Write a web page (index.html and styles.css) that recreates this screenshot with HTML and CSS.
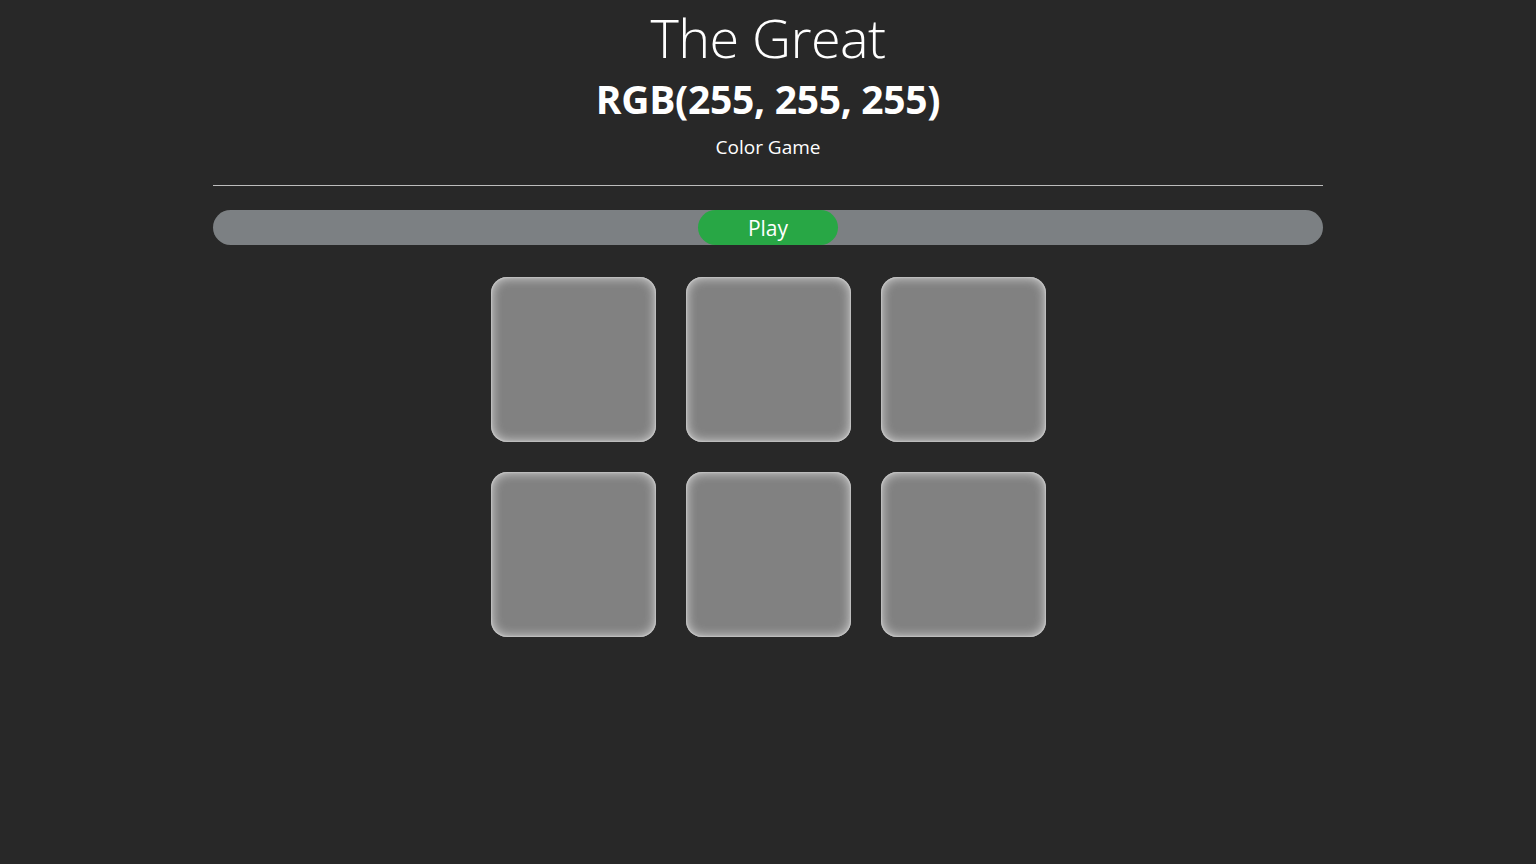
FILE: index.html
```html
<!DOCTYPE html>
<html lang="en">
<head>
  <meta charset="UTF-8" />
  <title>The Great RGB Color Game</title>
  <link rel="stylesheet" href="styles.css">
</head>
<body>
  <header class="head">
    <h1 class="title">The Great</h1>
    <h2 class="rgb">RGB(255, 255, 255)</h2>
    <p class="sub">Color Game</p>
  </header>

  <div class="container">
    <hr class="line">
    <div class="bar">
      <button class="play">Play</button>
    </div>

    <div class="board">
      <div class="square"></div>
      <div class="square"></div>
      <div class="square"></div>
      <div class="square"></div>
      <div class="square"></div>
      <div class="square"></div>
    </div>
  </div>
</body>
</html>
```

FILE: styles.css
```css
* {
  margin: 0;
  padding: 0;
  box-sizing: border-box;
}
body {
  font-family: "Open Sans", "Noto Sans", sans-serif;
  background: #282828;
  color: #fff;
  min-height: 100vh;
}

/* HEADER */
.head { text-align: center; padding-top: 4px; }
.title {
  font-size: 54px; font-weight: 300;
  line-height: 66px; letter-spacing: -0.6px;
}
.rgb {
  font-size: 39px; font-weight: 700;
  line-height: 58px; letter-spacing: -0.3px;
}
.sub {
  font-size: 19px; font-weight: 400;
  line-height: 32px; margin-top: 3px;
}

/* LAYOUT */
.container {
  width: 1110px; margin: 0 auto;
}
.line {
  border: none; border-top: 1px solid #bdbdbd;
  margin-top: 22px;
}

/* PLAY BAR */
.bar {
  margin-top: 24px;
  height: 35px; border-radius: 18px;
  background: #7c8083;
  display: flex; justify-content: center;
}
.play {
  width: 140px; height: 35px;
  border: none; border-radius: 18px;
  background: #28a745; color: #fff;
  font-family: inherit; font-size: 21px;
  cursor: pointer;
}

/* SQUARES */
.board {
  margin: 32px auto 0;
  width: 555px;
  display: grid;
  grid-template-columns: repeat(3, 165px);
  gap: 30px;
}
.square {
  height: 165px;
  background: #818181;
  border-radius: 16px;
  box-shadow: inset 0 0 2px #ececec, inset 0 0 12px rgba(240,240,240,0.85);
}
```
